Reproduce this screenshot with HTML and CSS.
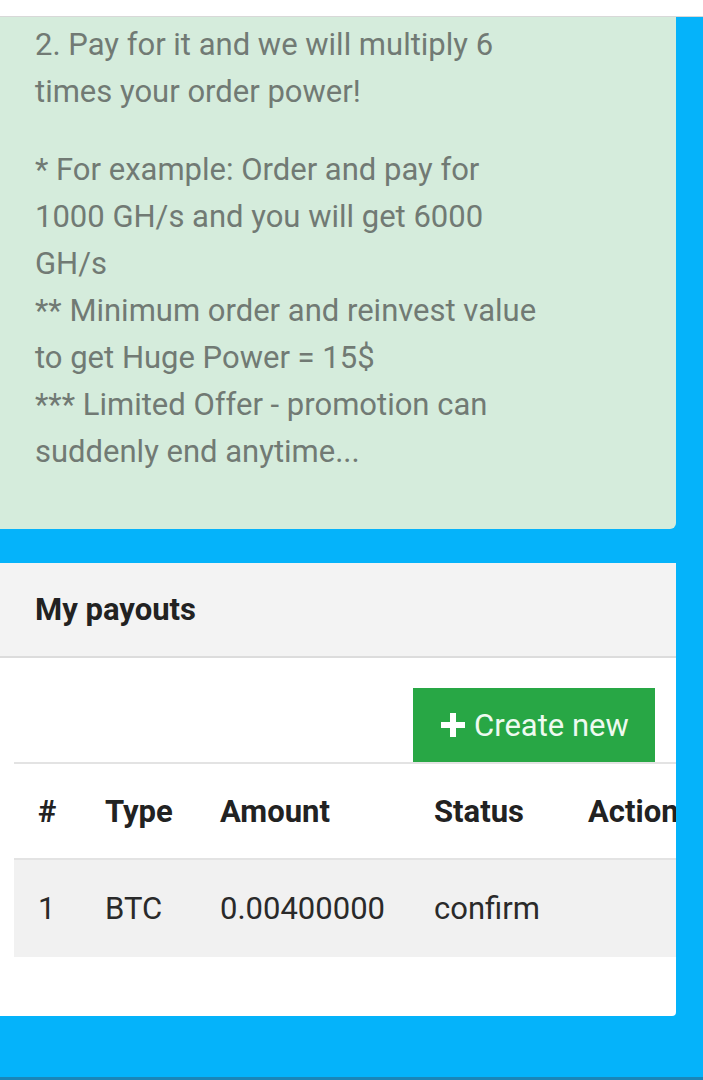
FILE: index.html
```html
<!DOCTYPE html>
<html lang="en"><head>
    <meta charset="UTF-8">
    <meta name="viewport" content="width=device-width, initial-scale=1.0">
    <title>My payouts</title>
    <link rel="stylesheet" href="styles.css">
</head>

<body>

    <div class="topbar"></div>

    <main class="page">
        <div class="promo">
            <p>2. Pay for it and we will multiply 6 times your order power!</p>
            <p>* For example: Order and pay for 1000 GH/s and you will get 6000 GH/s<br>
            ** Minimum order and reinvest value to get Huge Power = 15$<br>
            *** Limited Offer - promotion can suddenly end anytime...</p>
        </div>

        <section class="card">
            <div class="card-header">My payouts</div>
            <div class="card-body">
                <div class="actions">
                    <a class="btn-create" href="#">
                        <svg width="26" height="26" viewBox="0 0 26 26"><path d="M13 1v24M1 13h24" stroke="#fff" stroke-width="6"/></svg>
                        Create new
                    </a>
                </div>
                <div class="table-wrap">
                    <table class="payouts">
                        <thead>
                            <tr>
                                <th class="c-num">#</th>
                                <th class="c-type">Type</th>
                                <th class="c-amount">Amount</th>
                                <th class="c-status">Status</th>
                                <th class="c-action">Action</th>
                            </tr>
                        </thead>
                        <tbody>
                            <tr>
                                <td>1</td>
                                <td>BTC</td>
                                <td>0.00400000</td>
                                <td>confirm</td>
                                <td></td>
                            </tr>
                        </tbody>
                    </table>
                </div>
            </div>
        </section>
    </main>

</body></html>
```

FILE: styles.css
```css
body {
    font-family: 'Roboto', 'Liberation Sans', sans-serif;
    margin: 0;
    padding: 0;
    background-color: #05b3fa;
    min-height: 1077px;
    border-bottom: 3px solid #1a86b8;
}

.topbar {
    height: 16px;
    background-color: #fff;
    border-bottom: 1px solid #d8d8d8;
}

.page {
    width: 676px;
}

.promo {
    background-color: #d5ecdc;
    color: #717a74;
    font-size: 31px;
    line-height: 47px;
    padding: 4px 0 54px 35px;
    border-bottom-right-radius: 6px;
}

.promo p {
    margin: 0 0 31px;
    max-width: 512px;
}

.promo p:last-child {
    margin-bottom: 0;
}

.card {
    margin-top: 34px;
    background-color: #fff;
    border-bottom-right-radius: 4px;
    height: 453px;
}

.card-header {
    background-color: #f3f3f3;
    border-bottom: 2px solid #dcdcdc;
    height: 93px;
    line-height: 93px;
    padding-left: 35px;
    font-size: 31px;
    font-weight: bold;
    color: #222;
}

.card-body {
    padding: 30px 21px 0 14px;
}

.actions {
    display: flex;
    justify-content: flex-end;
}

.btn-create {
    display: flex;
    align-items: center;
    gap: 8px;
    width: 242px;
    height: 74px;
    box-sizing: border-box;
    padding-left: 27px;
    background-color: #28a745;
    color: #eefaf0;
    font-size: 31px;
    text-decoration: none;
}

.table-wrap {
    overflow: hidden;
    margin-right: -21px;
}

.payouts {
    border-collapse: collapse;
    width: 720px;
    font-size: 31px;
    color: #2a2a2a;
    border-top: 2px solid #e3e3e3;
}

.payouts th,
.payouts td {
    text-align: left;
    padding: 0 0 0 24px;
    white-space: nowrap;
}

.payouts th {
    height: 94px;
    font-weight: bold;
    color: #222;
    border-bottom: 2px solid #e3e3e3;
}

.payouts td {
    height: 97px;
    background-color: #f1f1f1;
}

.c-num { width: 43px; }
.c-type { width: 91px; }
.c-amount { width: 190px; }
.c-status { width: 130px; }
```
